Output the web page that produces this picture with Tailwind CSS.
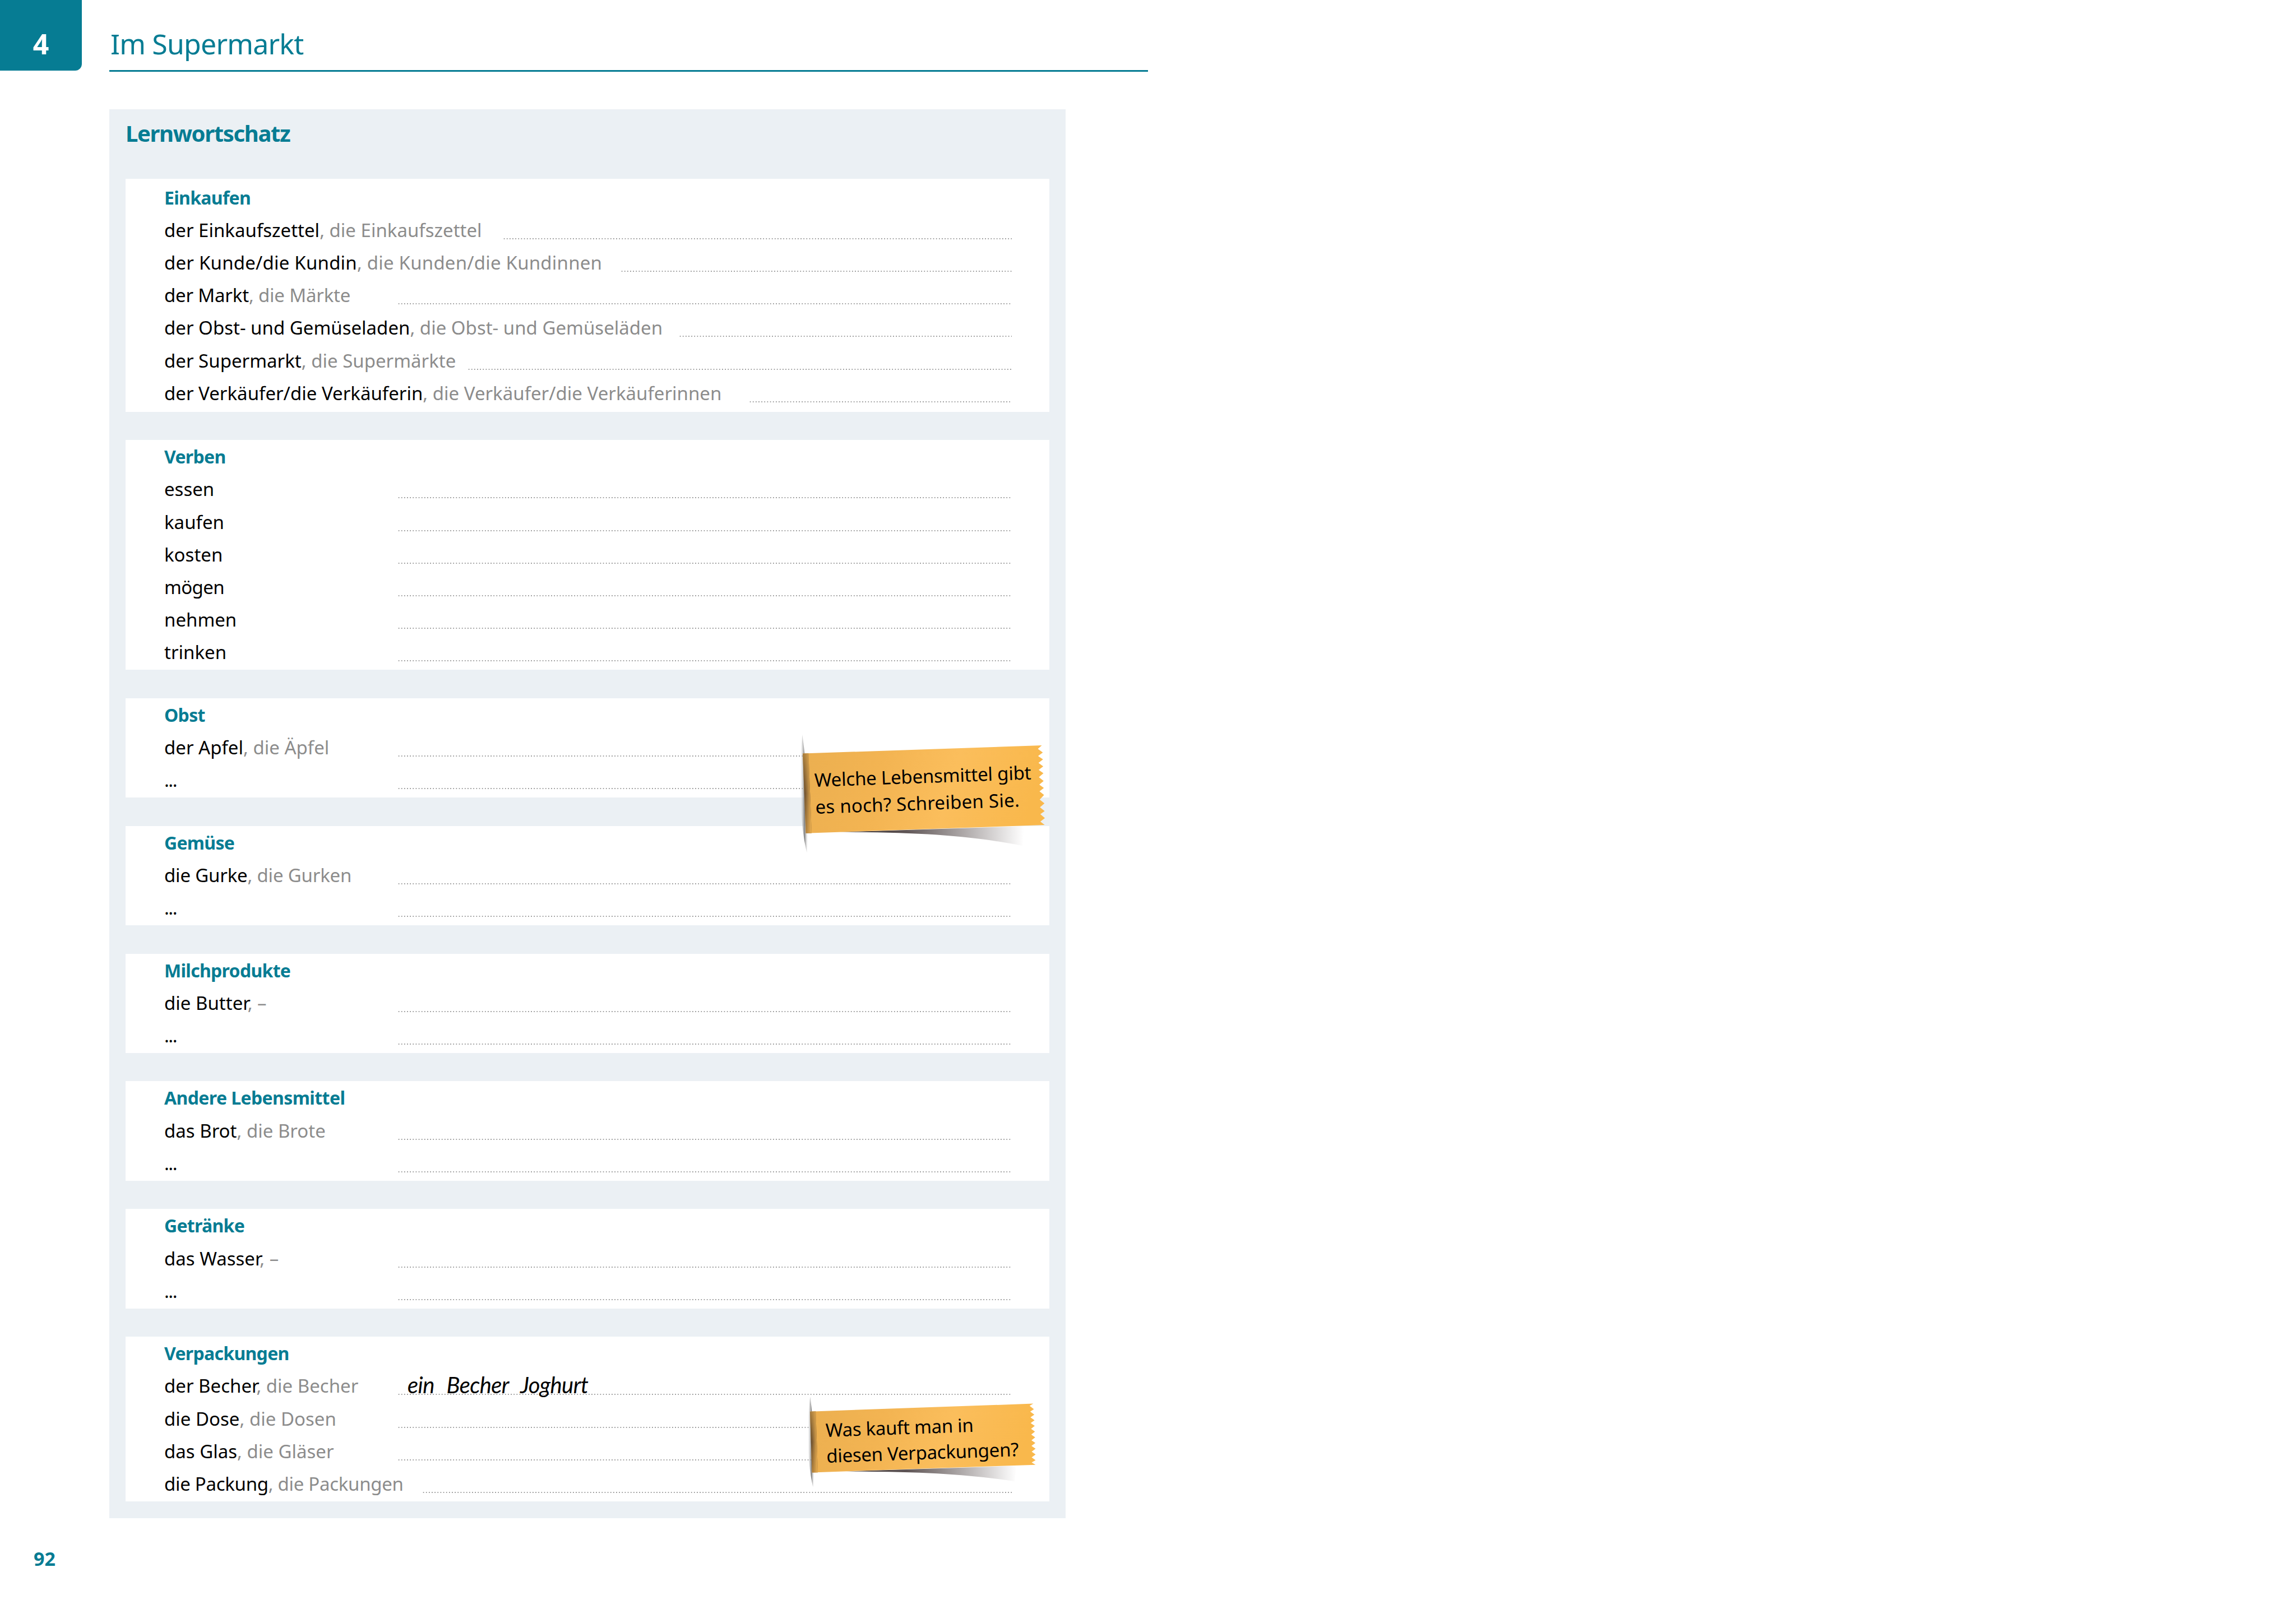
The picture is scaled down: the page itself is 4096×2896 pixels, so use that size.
<!DOCTYPE html>
<html lang="de">
<head>
    <meta charset="UTF-8">
    <title>Im Supermarkt</title>
    <script src="https://cdn.jsdelivr.net/npm/@tailwindcss/browser@4"></script>
</head>
<body class="bg-white font-['Noto_Sans',sans-serif] text-black">
<div class="relative w-[4096px] h-[2896px] overflow-hidden">

    <header class="flex h-[128px]">
        <div class="w-[146px] h-[126px] bg-[#067c93] rounded-br-[12px] flex items-center justify-center pt-[30px] text-white text-[50px] font-bold leading-none">4</div>
        <div class="ml-[49px] pl-[2px] w-[1853px] h-[128px] border-b-[3px] border-[#067c93] flex items-end pb-[12px] text-[#067c93] text-[50px] tracking-[-0.8px] leading-[70px]">Im Supermarkt</div>
    </header>

    <main class="mt-[67px] ml-[195px] w-[1706px] bg-[#ebf0f4] pt-[12px] px-[29px] pb-[29.8px]">
        <h1 class="text-[#067c93] text-[40px] font-bold leading-[62px] tracking-[-1.35px] mb-[50.2px]">Lernwortschatz</h1>

        <div class="flex flex-col gap-[50.5px] text-[33px]">

            <section class="bg-white pl-[69px] pr-[67.5px] pb-[17px] pt-[3.4px]">
                <h2 class="h-[46px] flex items-end text-[#067c93] text-[32px] font-bold leading-[32px] tracking-[-0.7px]">Einkaufen</h2>
                <div class="flex items-end h-[58.2px]"><div class="w-[603.5px] shrink-0 whitespace-nowrap leading-[32px]">der Einkaufszettel<span class="text-[#8c8c8c]">, die Einkaufszettel</span></div><div class="flex-1 h-[2px] bg-[radial-gradient(circle,#999999_1px,transparent_1px)] bg-[length:5.15px_2px]"></div></div>
                <div class="flex items-end h-[58.2px]"><div class="w-[813.5px] shrink-0 whitespace-nowrap leading-[32px] tracking-[0.2px]">der Kunde/die Kundin<span class="text-[#8c8c8c]">, die Kunden/die Kundinnen</span></div><div class="flex-1 h-[2px] bg-[radial-gradient(circle,#999999_1px,transparent_1px)] bg-[length:5.15px_2px]"></div></div>
                <div class="flex items-end h-[58.2px]"><div class="w-[416px] shrink-0 whitespace-nowrap leading-[32px] tracking-[-0.2px]">der Markt<span class="text-[#8c8c8c]">, die Märkte</span></div><div class="flex-1 h-[2px] bg-[radial-gradient(circle,#999999_1px,transparent_1px)] bg-[length:5.15px_2px]"></div></div>
                <div class="flex items-end h-[58.2px]"><div class="w-[918px] shrink-0 whitespace-nowrap leading-[32px]">der Obst- und Gemüseladen<span class="text-[#8c8c8c]">, die Obst- und Gemüseläden</span></div><div class="flex-1 h-[2px] bg-[radial-gradient(circle,#999999_1px,transparent_1px)] bg-[length:5.15px_2px]"></div></div>
                <div class="flex items-end h-[58.2px]"><div class="w-[541px] shrink-0 whitespace-nowrap leading-[32px]">der Supermarkt<span class="text-[#8c8c8c]">, die Supermärkte</span></div><div class="flex-1 h-[2px] bg-[radial-gradient(circle,#999999_1px,transparent_1px)] bg-[length:5.15px_2px]"></div></div>
                <div class="flex items-end h-[58.2px]"><div class="w-[1043px] shrink-0 whitespace-nowrap leading-[32px]">der Verkäufer/die Verkäuferin<span class="text-[#8c8c8c]">, die Verkäufer/die Verkäuferinnen</span></div><div class="flex-1 h-[2px] bg-[radial-gradient(circle,#999999_1px,transparent_1px)] bg-[length:5.15px_2px]"></div></div>
            </section>

            <section class="bg-white pl-[69px] pr-[67.5px] pb-[15px]">
                <h2 class="h-[46px] flex items-end text-[#067c93] text-[32px] font-bold leading-[32px] tracking-[-0.7px]">Verben</h2>
                <div class="flex items-end h-[58.2px]"><div class="w-[416px] shrink-0 whitespace-nowrap leading-[32px]">essen</div><div class="flex-1 h-[2px] bg-[radial-gradient(circle,#999999_1px,transparent_1px)] bg-[length:5.15px_2px]"></div></div>
                <div class="flex items-end h-[58.2px]"><div class="w-[416px] shrink-0 whitespace-nowrap leading-[32px]">kaufen</div><div class="flex-1 h-[2px] bg-[radial-gradient(circle,#999999_1px,transparent_1px)] bg-[length:5.15px_2px]"></div></div>
                <div class="flex items-end h-[58.2px]"><div class="w-[416px] shrink-0 whitespace-nowrap leading-[32px]">kosten</div><div class="flex-1 h-[2px] bg-[radial-gradient(circle,#999999_1px,transparent_1px)] bg-[length:5.15px_2px]"></div></div>
                <div class="flex items-end h-[58.2px]"><div class="w-[416px] shrink-0 whitespace-nowrap leading-[32px] tracking-[-0.6px]">mögen</div><div class="flex-1 h-[2px] bg-[radial-gradient(circle,#999999_1px,transparent_1px)] bg-[length:5.15px_2px]"></div></div>
                <div class="flex items-end h-[58.2px]"><div class="w-[416px] shrink-0 whitespace-nowrap leading-[32px]">nehmen</div><div class="flex-1 h-[2px] bg-[radial-gradient(circle,#999999_1px,transparent_1px)] bg-[length:5.15px_2px]"></div></div>
                <div class="flex items-end h-[58.2px]"><div class="w-[416px] shrink-0 whitespace-nowrap leading-[32px]">trinken</div><div class="flex-1 h-[2px] bg-[radial-gradient(circle,#999999_1px,transparent_1px)] bg-[length:5.15px_2px]"></div></div>
            </section>

            <section class="bg-white pl-[69px] pr-[67.5px] pb-[15px]">
                <h2 class="h-[46px] flex items-end text-[#067c93] text-[32px] font-bold leading-[32px] tracking-[-0.7px]">Obst</h2>
                <div class="flex items-end h-[58.2px]"><div class="w-[416px] shrink-0 whitespace-nowrap leading-[32px]">der Apfel<span class="text-[#8c8c8c]">, die Äpfel</span></div><div class="flex-1 h-[2px] bg-[radial-gradient(circle,#999999_1px,transparent_1px)] bg-[length:5.15px_2px]"></div></div>
                <div class="flex items-end h-[58.2px]"><div class="w-[416px] shrink-0 whitespace-nowrap leading-[32px] tracking-[-1.5px]">...</div><div class="flex-1 h-[2px] bg-[radial-gradient(circle,#999999_1px,transparent_1px)] bg-[length:5.15px_2px]"></div></div>
            </section>

            <section class="bg-white pl-[69px] pr-[67.5px] pb-[15px]">
                <h2 class="h-[46px] flex items-end text-[#067c93] text-[32px] font-bold leading-[32px] tracking-[-0.7px]">Gemüse</h2>
                <div class="flex items-end h-[58.2px]"><div class="w-[416px] shrink-0 whitespace-nowrap leading-[32px] tracking-[-0.2px]">die Gurke<span class="text-[#8c8c8c]">, die Gurken</span></div><div class="flex-1 h-[2px] bg-[radial-gradient(circle,#999999_1px,transparent_1px)] bg-[length:5.15px_2px]"></div></div>
                <div class="flex items-end h-[58.2px]"><div class="w-[416px] shrink-0 whitespace-nowrap leading-[32px] tracking-[-1.5px]">...</div><div class="flex-1 h-[2px] bg-[radial-gradient(circle,#999999_1px,transparent_1px)] bg-[length:5.15px_2px]"></div></div>
            </section>

            <section class="bg-white pl-[69px] pr-[67.5px] pb-[15px]">
                <h2 class="h-[46px] flex items-end text-[#067c93] text-[32px] font-bold leading-[32px] tracking-[-0.7px]">Milchprodukte</h2>
                <div class="flex items-end h-[58.2px]"><div class="w-[416px] shrink-0 whitespace-nowrap leading-[32px]">die Butter<span class="text-[#8c8c8c]">, –</span></div><div class="flex-1 h-[2px] bg-[radial-gradient(circle,#999999_1px,transparent_1px)] bg-[length:5.15px_2px]"></div></div>
                <div class="flex items-end h-[58.2px]"><div class="w-[416px] shrink-0 whitespace-nowrap leading-[32px] tracking-[-1.5px]">...</div><div class="flex-1 h-[2px] bg-[radial-gradient(circle,#999999_1px,transparent_1px)] bg-[length:5.15px_2px]"></div></div>
            </section>

            <section class="bg-white pl-[69px] pr-[67.5px] pb-[15px]">
                <h2 class="h-[46px] flex items-end text-[#067c93] text-[32px] font-bold leading-[32px] tracking-[-0.6px]">Andere Lebensmittel</h2>
                <div class="flex items-end h-[58.2px]"><div class="w-[416px] shrink-0 whitespace-nowrap leading-[32px]">das Brot<span class="text-[#8c8c8c]">, die Brote</span></div><div class="flex-1 h-[2px] bg-[radial-gradient(circle,#999999_1px,transparent_1px)] bg-[length:5.15px_2px]"></div></div>
                <div class="flex items-end h-[58.2px]"><div class="w-[416px] shrink-0 whitespace-nowrap leading-[32px] tracking-[-1.5px]">...</div><div class="flex-1 h-[2px] bg-[radial-gradient(circle,#999999_1px,transparent_1px)] bg-[length:5.15px_2px]"></div></div>
            </section>

            <section class="bg-white pl-[69px] pr-[67.5px] pb-[15px]">
                <h2 class="h-[46px] flex items-end text-[#067c93] text-[32px] font-bold leading-[32px] tracking-[-0.7px]">Getränke</h2>
                <div class="flex items-end h-[58.2px]"><div class="w-[416px] shrink-0 whitespace-nowrap leading-[32px]">das Wasser<span class="text-[#8c8c8c]">, –</span></div><div class="flex-1 h-[2px] bg-[radial-gradient(circle,#999999_1px,transparent_1px)] bg-[length:5.15px_2px]"></div></div>
                <div class="flex items-end h-[58.2px]"><div class="w-[416px] shrink-0 whitespace-nowrap leading-[32px] tracking-[-1.5px]">...</div><div class="flex-1 h-[2px] bg-[radial-gradient(circle,#999999_1px,transparent_1px)] bg-[length:5.15px_2px]"></div></div>
            </section>

            <section class="bg-white pl-[69px] pr-[67.5px] pb-[15px]">
                <h2 class="h-[46px] flex items-end text-[#067c93] text-[32px] font-bold leading-[32px] tracking-[-0.7px]">Verpackungen</h2>
                <div class="relative flex items-end h-[58.2px]">
                    <div class="w-[416px] shrink-0 whitespace-nowrap leading-[32px]">der Becher<span class="text-[#8c8c8c]">, die Becher</span></div><div class="flex-1 h-[2px] bg-[radial-gradient(circle,#999999_1px,transparent_1px)] bg-[length:5.15px_2px]"></div>
                    <div class="absolute left-[434px] bottom-[-6px] font-['Lato',sans-serif] italic font-normal text-[40px] leading-[48px] tracking-[-0.6px] [word-spacing:13px] whitespace-nowrap">ein Becher Joghurt</div>
                </div>
                <div class="flex items-end h-[58.2px]"><div class="w-[416px] shrink-0 whitespace-nowrap leading-[32px]">die Dose<span class="text-[#8c8c8c]">, die Dosen</span></div><div class="flex-1 h-[2px] bg-[radial-gradient(circle,#999999_1px,transparent_1px)] bg-[length:5.15px_2px]"></div></div>
                <div class="flex items-end h-[58.2px]"><div class="w-[416px] shrink-0 whitespace-nowrap leading-[32px]">das Glas<span class="text-[#8c8c8c]">, die Gläser</span></div><div class="flex-1 h-[2px] bg-[radial-gradient(circle,#999999_1px,transparent_1px)] bg-[length:5.15px_2px]"></div></div>
                <div class="flex items-end h-[58.2px]"><div class="w-[460px] shrink-0 whitespace-nowrap leading-[32px] tracking-[-0.3px]">die Packung<span class="text-[#8c8c8c]">, die Packungen</span></div><div class="flex-1 h-[2px] bg-[radial-gradient(circle,#999999_1px,transparent_1px)] bg-[length:5.15px_2px]"></div></div>
            </section>
        </div>
    </main>

    <footer class="mt-[55px] ml-[60px] text-[#067c93] text-[34px] font-bold leading-[34px]">92</footer>

    <!-- Klebezettel 1 -->
    <div class="absolute left-[1362px] top-[1271.4px] w-[578px] h-[281px]">
        <svg class="absolute inset-0 w-full h-full" viewBox="0 0 1568 1020" preserveAspectRatio="none">
            <defs>
                <linearGradient id="tapeBody" x1="0" y1="0" x2="1" y2="0.1">
                    <stop offset="0" stop-color="#ebaf50"/>
                    <stop offset="0.35" stop-color="#f3b452"/>
                    <stop offset="0.65" stop-color="#fbbe5c"/>
                    <stop offset="1" stop-color="#f9b84c"/>
                </linearGradient>
                <linearGradient id="foldDark" x1="0" y1="0" x2="0" y2="1">
                    <stop offset="0" stop-color="#a37a3c"/>
                    <stop offset="0.5" stop-color="#4a3626"/>
                    <stop offset="1" stop-color="#8f6733"/>
                </linearGradient>
                <linearGradient id="foldFade" x1="0" y1="0" x2="1" y2="0">
                    <stop offset="0" stop-color="#ebaf50" stop-opacity="0"/>
                    <stop offset="1" stop-color="#ebaf50" stop-opacity="1"/>
                </linearGradient>
                <linearGradient id="wedge" x1="0" y1="0" x2="1" y2="0">
                    <stop offset="0" stop-color="#332a2a"/>
                    <stop offset="0.35" stop-color="#5d5353"/>
                    <stop offset="1" stop-color="#ffffff"/>
                </linearGradient>
                <linearGradient id="sideShadow" x1="0" y1="0" x2="1" y2="0">
                    <stop offset="0" stop-color="#ffffff" stop-opacity="0.2"/>
                    <stop offset="0.55" stop-color="#6a6a6a" stop-opacity="0.85"/>
                    <stop offset="1" stop-color="#ffffff" stop-opacity="0.1"/>
                </linearGradient>
            </defs>
            <path d="M188 145 C172 400 172 700 210 910 C224 700 214 400 188 145 Z" fill="url(#sideShadow)"/>
            <path d="M370 776 L1260 738 L1255 865 C1050 810 800 775 370 776 Z" fill="url(#wedge)"/>
            <polygon fill="url(#tapeBody)" points="190,267 1347,214 1328,237 1352,260 1329,283 1353,305 1331,328 1354,350 1332,373 1355,395 1333,420 1356,445 1335,468 1357,490 1336,512 1358,535 1337,565 1360,590 1338,615 1361,640 1340,660 1362,685 1340,708 1361,730 205,783"/>
            <polygon fill="url(#foldDark)" points="190,267 218,266 233,782 205,783"/>
            <polygon fill="url(#foldFade)" points="190,267 218,266 233,782 205,783"/>
        </svg>
        <div class="absolute left-[90px] top-[96.6px] origin-top-left -rotate-2 whitespace-nowrap text-[33px] tracking-[-0.2px] leading-[47.8px]">Welche Lebensmittel gibt<br><span class="tracking-[0.25px]">es noch? Schreiben Sie.</span></div>
    </div>

    <!-- Klebezettel 2 -->
    <div class="absolute left-[1362px] top-[2435.5px] w-[578px] h-[281px]">
        <svg class="absolute inset-0 w-full h-full" viewBox="0 0 1568 1020" preserveAspectRatio="none">
            <path d="M226 205 C208 400 210 620 240 790 C254 620 246 400 226 205 Z" fill="url(#sideShadow)"/>
            <path d="M400 688 L1225 652 L1215 752 C1000 710 800 690 400 688 Z" fill="url(#wedge)"/>
            <polygon fill="url(#tapeBody)" points="225,300 1306,249 1288,263 1309,285 1291,300 1311,320 1292,338 1312,357 1293,375 1313,393 1295,412 1314,430 1296,449 1315,467 1297,486 1316,504 1297,523 1317,541 1298,560 1317,578 1298,597 1317,615 1298,630 1317,645 235,695"/>
            <polygon fill="url(#foldDark)" points="225,300 253,299 263,694 235,695"/>
            <polygon fill="url(#foldFade)" points="225,300 253,299 263,694 235,695"/>
        </svg>
        <div class="absolute left-[110px] top-[93.8px] origin-top-left -rotate-2 whitespace-nowrap text-[33px] tracking-[-0.3px] leading-[46px]">Was kauft man in<br>diesen Verpackungen?</div>
    </div>
</div>
</body>
</html>
